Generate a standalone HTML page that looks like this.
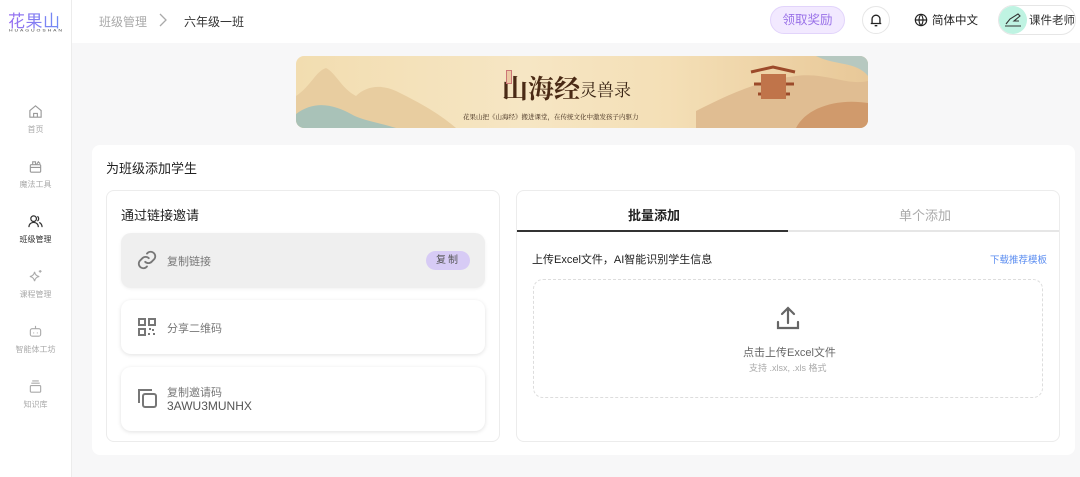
<!DOCTYPE html>
<html><head><meta charset="utf-8"><style>
*{box-sizing:border-box;margin:0;padding:0}
body{width:1080px;height:477px;overflow:hidden;background:#f7f7f8;font-family:"Liberation Sans","Noto Sans CJK SC",sans-serif;position:relative;color:#333}
.abs{position:absolute}
.side{left:0;top:0;width:72px;height:477px;background:#fff;border-right:1px solid #ececec}
.nav{position:absolute;left:0;width:71px;text-align:center;font-size:8px;color:#aaa}
.nav svg{display:block;margin:0 auto 5px}
.hdr{left:72px;top:0;width:1008px;height:43px;background:#fff}
.card{background:#fff;border-radius:8px}
.item{position:absolute;left:121px;width:364px;border-radius:10px;background:#fff;box-shadow:0 1px 4px rgba(0,0,0,.12);font-size:11px;color:#777}
</style></head><body>
<div class="abs side">
 <div class="abs" style="left:8px;top:7px;font-size:17px;letter-spacing:.5px;background:linear-gradient(90deg,#9a6ff0,#6e8cf5);-webkit-background-clip:text;color:transparent">花果山</div>
 <div class="abs" style="left:9px;top:28px;font-size:5px;letter-spacing:1.9px;color:#444;transform:scaleY(.7)">HUAGUOSHAN</div>
 <div class="nav" style="top:104px"><svg width="15" height="15" viewBox="0 0 16 16" fill="none" stroke="#999" stroke-width="1.2"><path d="M2 7L8 2l6 5v7H2z"/><path d="M6 14v-4h4v4"/></svg>首页</div>
 <div class="nav" style="top:159px"><svg width="15" height="15" viewBox="0 0 16 16" fill="none" stroke="#999" stroke-width="1.2"><rect x="2.5" y="6" width="11" height="8" rx="1"/><path d="M2.5 9h11M5 6V3h3v3M9 6l2-3 2 2"/></svg>魔法工具</div>
 <div class="nav" style="top:214px;color:#333"><svg width="15" height="15" viewBox="0 0 16 16" fill="none" stroke="#333" stroke-width="1.3"><circle cx="6" cy="5" r="3"/><path d="M1 14c0-3 2-5 5-5s5 2 5 5M10 2.5a3 3 0 010 5M12 9c2 1 3 3 3 5"/></svg>班级管理</div>
 <div class="nav" style="top:269px"><svg width="15" height="15" viewBox="0 0 16 16" fill="none" stroke="#aaa" stroke-width="1.2"><path d="M7 3c.5 3 2 4.5 5 5-3 .5-4.5 2-5 5-.5-3-2-4.5-5-5 3-.5 4.5-2 5-5zM13 1v3M11.5 2.5h3"/></svg>课程管理</div>
 <div class="nav" style="top:324px"><svg width="15" height="15" viewBox="0 0 16 16" fill="none" stroke="#aaa" stroke-width="1.2"><rect x="2.5" y="5" width="11" height="8" rx="2"/><path d="M8 5V2M6 9v1M10 9v1"/></svg>智能体工坊</div>
 <div class="nav" style="top:379px"><svg width="15" height="15" viewBox="0 0 16 16" fill="none" stroke="#aaa" stroke-width="1.2"><rect x="2.5" y="7" width="11" height="7" rx="1"/><path d="M3.5 4.5h9M4.5 2h7"/></svg>知识库</div>
</div>
<div class="abs hdr">
 <div class="abs" style="left:27px;top:13px;font-size:12px;color:#aaa">班级管理</div>
 <svg class="abs" style="left:86px;top:13px" width="10" height="14" viewBox="0 0 10 14" fill="none" stroke="#aaa" stroke-width="1.3"><path d="M2 1l6 6-6 6"/></svg>
 <div class="abs" style="left:112px;top:13px;font-size:12px;color:#333">六年级一班</div>
 <div class="abs" style="left:698px;top:6px;width:75px;height:28px;border-radius:14px;background:#f2e9ff;border:1px solid #e2d4fb;color:#9a72e8;font-size:12.5px;text-align:center;line-height:26px">领取奖励</div>
 <div class="abs" style="left:790px;top:6px;width:28px;height:28px;border-radius:14px;border:1px solid #e6e6e6"><svg width="14" height="14" viewBox="0 0 16 16" style="margin:6px" fill="none" stroke="#222" stroke-width="1.5"><path d="M3.5 12V7a4.5 4.5 0 019 0v5M2 12h12M6.5 14.5h3"/></svg></div>
 <svg class="abs" style="left:842px;top:13px" width="14" height="14" viewBox="0 0 16 16" fill="none" stroke="#222" stroke-width="1.3"><circle cx="8" cy="8" r="6.5"/><path d="M1.5 8h13M8 1.5c-3 3.5-3 9.5 0 13M8 1.5c3 3.5 3 9.5 0 13"/></svg>
 <div class="abs" style="left:860px;top:12px;font-size:11.5px;color:#222">简体中文</div>
 <div class="abs" style="left:926px;top:5px;width:78px;height:30px;border-radius:15px;border:1px solid #e6e6e6"></div>
 <div class="abs" style="left:927px;top:6px;width:28px;height:28px;border-radius:14px;background:#bff3e2"><svg width="20" height="16" viewBox="0 0 20 16" style="margin:6px 4px" fill="none" stroke="#333" stroke-width="1.1"><path d="M2 14h16M3 12l4-5 8-5 2 2-6 5h5"/></svg></div>
 <div class="abs" style="left:957px;top:12px;font-size:11.5px;color:#333">课件老师</div>
</div>
<div class="abs" style="left:296px;top:56px;width:572px;height:72px;border-radius:8px;overflow:hidden;background:linear-gradient(90deg,#f2ddb0 0%,#f6e6c4 40%,#f4dfb6 65%,#e8c898 100%)">
 <svg class="abs" style="left:0;top:0" width="572" height="72"><path d="M0 72V40c15-10 20-25 30-28 10 5 15 20 30 28 10-10 25-12 40-5 20 10 40 20 60 37z" fill="#e8cda0"/><path d="M0 72V58c20-15 40-8 55 0 10 6 25 8 45 14z" fill="#a9c2b8"/><path d="M400 72V55c30-15 60-30 100-35 30-4 50 10 72 5v47z" fill="#e0bd92"/><path d="M455 16l22-5 22 5M458 28h40M462 38h32" stroke="#9c4a2a" stroke-width="3" fill="none"/><rect x="465" y="18" width="25" height="25" fill="#c0744a"/><path d="M500 72c10-20 40-30 72-25v25z" fill="#d09a6c"/><path d="M520 0c20 10 40 5 52 20V0z" fill="#b6c8c0"/></svg>
 <div class="abs" style="left:206px;top:15px;font-size:26px;font-weight:bold;color:#4a2a15;font-family:'Noto Serif CJK SC',serif;line-height:34px">山海经</div>
 <div class="abs" style="left:284px;top:21px;font-size:17px;color:#3a2515;font-family:'Noto Serif CJK SC',serif;line-height:24px">灵兽录</div>
 <div class="abs" style="left:210px;top:14px;width:6px;height:14px;background:#ecc9a3;border:1px solid #c77"></div>
 <div class="abs" style="left:167px;top:56px;font-size:6.5px;color:#3a2515;font-family:'Noto Serif CJK SC',serif">花果山把《山海经》搬进课堂，在传统文化中激发孩子内驱力</div>
</div>
<div class="abs card" style="left:92px;top:145px;width:983px;height:310px"></div>
<div class="abs" style="left:106px;top:158px;font-size:13px;color:#222">为班级添加学生</div>
<div class="abs card" style="left:106px;top:190px;width:394px;height:252px;border:1px solid #ececec"></div>
<div class="abs" style="left:121px;top:205px;font-size:13px;color:#222">通过链接邀请</div>
<div class="item" style="top:233px;height:55px;background:#efefef;box-shadow:0 1px 3px rgba(0,0,0,.06)">
 <svg class="abs" style="left:15px;top:16px" width="22" height="22" viewBox="0 0 24 24" fill="none" stroke="#777" stroke-width="2" stroke-linecap="round"><path d="M10 14a5 5 0 007 0l3-3a5 5 0 00-7-7l-1 1"/><path d="M14 10a5 5 0 00-7 0l-3 3a5 5 0 007 7l1-1"/></svg>
 <div class="abs" style="left:46px;top:20px">复制链接</div>
 <div class="abs" style="left:305px;top:18px;width:44px;height:19px;border-radius:10px;background:#d7cbf5;color:#555;font-size:10px;text-align:center;line-height:19px;letter-spacing:2px">复制</div>
</div>
<div class="item" style="top:300px;height:54px">
 <svg class="abs" style="left:16px;top:17px" width="20" height="20" viewBox="0 0 20 20" fill="none" stroke="#777" stroke-width="2"><rect x="2" y="2" width="6" height="6"/><rect x="12" y="2" width="6" height="6"/><rect x="2" y="12" width="6" height="6"/><path d="M12 12h2M16 12v2M12 16v2M16 17h2"/></svg>
 <div class="abs" style="left:46px;top:20px">分享二维码</div>
</div>
<div class="item" style="top:367px;height:64px">
 <svg class="abs" style="left:15px;top:20px" width="22" height="22" viewBox="0 0 22 22" fill="none" stroke="#777" stroke-width="2"><rect x="7" y="7" width="13" height="13" rx="2"/><path d="M4 15H3V3h12v1"/></svg>
 <div class="abs" style="left:46px;top:17px">复制邀请码</div>
 <div class="abs" style="left:46px;top:32px;color:#555;font-size:12px">3AWU3MUNHX</div>
</div>
<div class="abs card" style="left:516px;top:190px;width:544px;height:252px;border:1px solid #ececec"></div>
<div class="abs" style="left:628px;top:205px;font-size:13px;font-weight:bold;color:#222">批量添加</div>
<div class="abs" style="left:899px;top:205px;font-size:13px;color:#aaa">单个添加</div>
<div class="abs" style="left:517px;top:230px;width:542px;height:2px;background:#e6e6e6"></div>
<div class="abs" style="left:517px;top:230px;width:271px;height:2px;background:#333"></div>
<div class="abs" style="left:532px;top:251px;font-size:11px;color:#222">上传Excel文件，AI智能识别学生信息</div>
<div class="abs" style="left:990px;top:252px;font-size:9.5px;color:#5a8cf0">下载推荐模板</div>
<div class="abs" style="left:533px;top:279px;width:510px;height:119px;border:1.5px dashed #ddd;border-radius:10px"></div>
<svg class="abs" style="left:775px;top:305px" width="26" height="26" viewBox="0 0 26 26" fill="none" stroke="#666" stroke-width="2.2" stroke-linecap="round"><path d="M13 18V3M7 9l6-6 6 6M3 17v6h20v-6"/></svg>
<div class="abs" style="left:743px;top:344px;font-size:11px;color:#666">点击上传Excel文件</div>
<div class="abs" style="left:749px;top:361px;font-size:9px;color:#aaa">支持 .xlsx, .xls 格式</div>
</body></html>
